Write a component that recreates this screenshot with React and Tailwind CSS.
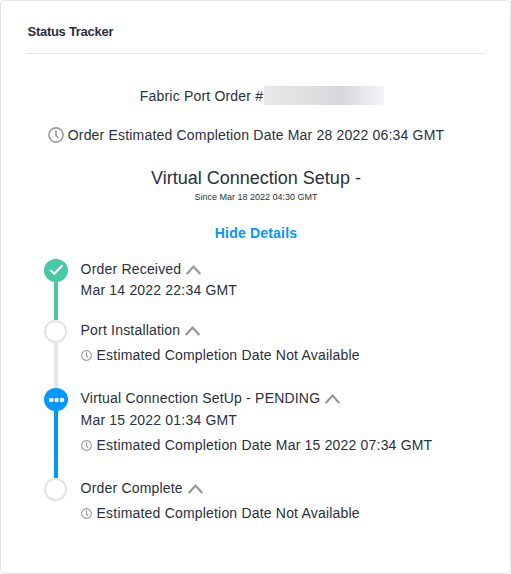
const steps = [
  {
    id: "received",
    title: "Order Received",
    date: "Mar 14 2022 22:34 GMT",
    status: "done",
    height: "h-[61px]",
  },
  {
    id: "port",
    title: "Port Installation",
    estimate: "Estimated Completion Date Not Available",
    status: "todo",
    height: "h-[68px]",
  },
  {
    id: "connection",
    title: "Virtual Connection SetUp - PENDING",
    date: "Mar 15 2022 01:34 GMT",
    estimate: "Estimated Completion Date Mar 15 2022 07:34 GMT",
    status: "pending",
    height: "h-[90px]",
  },
  {
    id: "complete",
    title: "Order Complete",
    estimate: "Estimated Completion Date Not Available",
    status: "todo",
    height: "h-[50px]",
  },
];

const lineColors = {
  done: "bg-[#48c9a5]",
  todo: "bg-[#e1e4e9]",
  pending: "bg-[#0098ff]",
};

function Clock({ className }) {
  return (
    <svg viewBox="0 0 16 16" fill="none" stroke="#9a9a9a" strokeWidth="1.6" className={className}>
      <circle cx="8" cy="8" r="7.1" />
      <path d="M8 3.2V8.3L10.4 11" />
    </svg>
  );
}

function Chevron() {
  return (
    <svg viewBox="0 0 15 10" fill="none" stroke="#969696" strokeWidth="2.2" className="w-[15px] h-[10px] shrink-0">
      <path d="M0.8 9.1L7.5 1.6L14.2 9.1" />
    </svg>
  );
}

function Marker({ status }) {
  if (status === "todo") {
    return <div className="w-[23px] h-[23px] shrink-0 rounded-full border-2 border-[#e1e4e9] bg-white" />;
  }

  return (
    <svg viewBox="0 0 24 23" className="w-6 h-[23px] shrink-0">
      <ellipse cx="12" cy="11.5" rx="12" ry="11.5" fill={status === "done" ? "#48c9a5" : "#0098ff"} />
      {status === "done" ? (
        <path d="M6.3 11L10.3 14.8L18.5 6.2" fill="none" stroke="#fff" strokeWidth="2.2" />
      ) : (
        <g fill="#fff">
          <circle cx="7.3" cy="12" r="2.3" />
          <circle cx="12.6" cy="12" r="2.3" />
          <circle cx="17.9" cy="12" r="2.3" />
        </g>
      )}
    </svg>
  );
}

function Step({ step, last }) {
  return (
    <li className={`flex ${step.height}`}>
      <div className="w-[36.6px] shrink-0 flex flex-col items-start">
        <Marker status={step.status} />
        {!last && <div className={`w-1 grow ml-2.5 ${lineColors[step.status]}`} />}
      </div>
      <div className="whitespace-nowrap">
        <div className="flex items-center gap-[5px] h-[21px]">
          <span>{step.title}</span>
          <Chevron />
        </div>
        {step.date && (
          <p className={step.estimate ? "h-[22px] leading-[22px]" : "h-5 leading-5"}>{step.date}</p>
        )}
        {step.estimate && (
          <div className="flex items-center gap-[5px] mt-1 h-[21px]">
            <Clock className="w-[11px] h-[11px] shrink-0 mb-px" />
            <span>{step.estimate}</span>
          </div>
        )}
      </div>
    </li>
  );
}

function App() {
  return (
    <div
      className="w-[511px] h-[574px] overflow-hidden rounded border border-[#e1e4e9] bg-white px-[25px]
        font-['Liberation_Sans',Arial,sans-serif] text-sm leading-[21px] tracking-[0.19px] text-[#2a303c]"
    >
      <header className="h-[53px] pt-5 pl-[1.5px] border-b border-[#e1e4e9]">
        <h1 className="text-[13px] font-bold tracking-[-0.28px]">Status Tracker</h1>
      </header>

      <section className="flex flex-col items-center whitespace-nowrap">
        <div className="flex items-center mt-8 h-5 ml-[13px]">
          <span>Fabric Port Order #</span>
          <div className="w-[120px] h-[19px] ml-px self-start bg-linear-to-r from-[#e8e8e9] from-5% via-[#d8d8da] via-65% to-[#f5f6f8]" />
        </div>
        <div className="flex items-center gap-1 mt-[19px] h-[21px] -ml-[19px]">
          <Clock className="w-4 h-4 shrink-0 mb-0.5" />
          <span>Order Estimated Completion Date Mar 28 2022 06:34 GMT</span>
        </div>
        <h2 className="mt-5 h-6 text-lg leading-6 tracking-normal ml-px">Virtual Connection Setup -</h2>
        <p className="mt-px h-3 text-[9px] leading-3 tracking-normal ml-px">Since Mar 18 2022 04:30 GMT</p>
        <button className="mt-5 h-[21px] font-bold text-[#0098ff] ml-px">Hide Details</button>
      </section>

      <ul className="mt-[15px] ml-[18px]">
        {steps.map((step, i) => (
          <Step key={step.id} step={step} last={i === steps.length - 1} />
        ))}
      </ul>
    </div>
  );
}

export default App;
